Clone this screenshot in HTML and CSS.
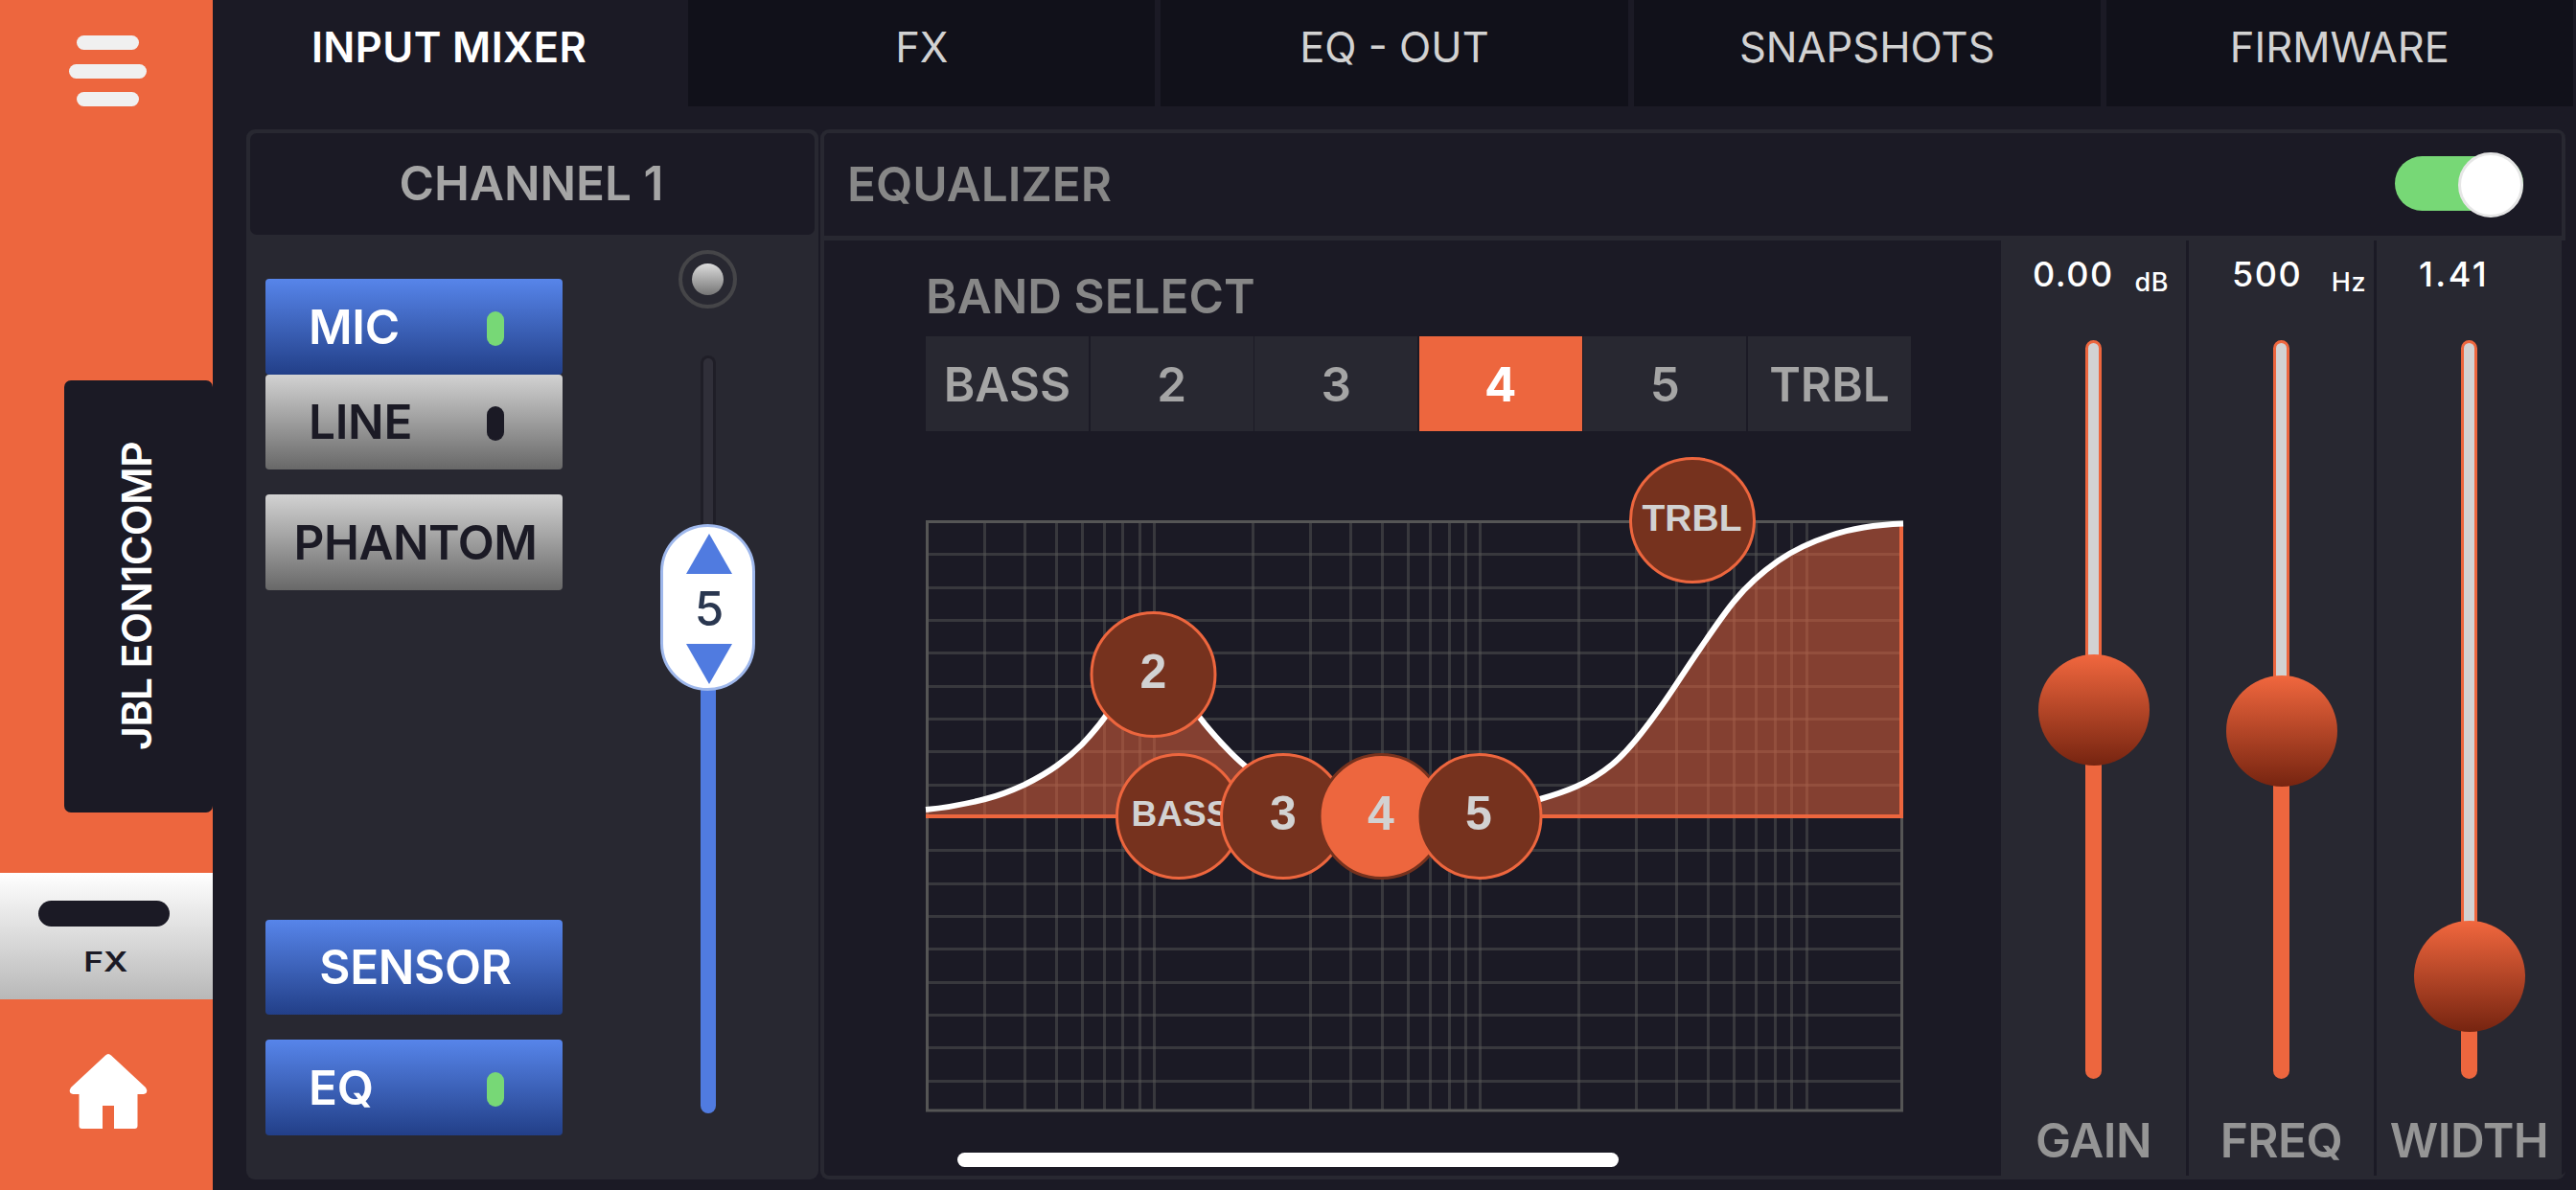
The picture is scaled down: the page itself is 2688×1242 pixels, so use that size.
FILE: index.html
```html
<!DOCTYPE html>
<html lang="en">
<head>
    <meta charset="UTF-8">
    <meta name="viewport" content="width=device-width, initial-scale=1.0">
    <title>Input Mixer</title>
    <link rel="stylesheet" href="styles.css">
</head>
<body>
    <aside class="sidebar">
        <button class="menu-button" aria-label="Menu">
            <span class="menu-bar short"></span>
            <span class="menu-bar"></span>
            <span class="menu-bar short"></span>
        </button>
        <div class="device-tab"><span class="device-name">JBL EON1COMP</span></div>
        <button class="fx-button">
            <span class="fx-light"></span>
            <span class="fx-label">FX</span>
        </button>
        <svg class="home-icon" viewBox="0 0 82 78">
            <path d="M41 0 Q42.500 0 44 1.500 L80 35 Q82 38 81 40 Q80 42 76 42 L71.500 42 L71.500 75 Q71.500 78 68.500 78 L47 78 L47 54 L35 54 L35 78 L13.500 78 Q10.500 78 10.500 75 L10.500 42 L6 42 Q2 42 1 40 Q0 38 2 35 L38 1.500 Q39.500 0 41 0Z" fill="#fff"/>
        </svg>
    </aside>

    <main>
        <nav class="tabs">
            <div class="tab active">INPUT MIXER</div>
            <div class="tab">FX</div>
            <div class="tab">EQ - OUT</div>
            <div class="tab">SNAPSHOTS</div>
            <div class="tab">FIRMWARE</div>
        </nav>

        <div class="panels">
            <section class="channel">
                <h2 class="channel-title">CHANNEL 1</h2>
                <div class="channel-body">
                    <div class="channel-buttons">
                        <button class="btn blue">MIC<span class="led on"></span></button>
                        <button class="btn gray">LINE<span class="led"></span></button>
                        <button class="btn gray center phantom">PHANTOM</button>
                        <button class="btn blue center sensor">SENSOR</button>
                        <button class="btn blue eq">EQ<span class="led on"></span></button>
                    </div>
                    <div class="fader">
                        <div class="signal"><span class="signal-dot"></span></div>
                        <div class="fader-track">
                            <div class="fader-thumb">
                                <svg class="arrow" viewBox="0 0 48 42"><path d="M24 0 L48 42 H0Z" fill="#507be0"/></svg>
                                <span class="fader-value">5</span>
                                <svg class="arrow" viewBox="0 0 48 42"><path d="M0 0 H48 L24 42Z" fill="#507be0"/></svg>
                            </div>
                        </div>
                    </div>
                </div>
            </section>

            <section class="equalizer">
                <header class="eq-header">
                    <h2 class="eq-title">EQUALIZER</h2>
                    <div class="switch"><span class="switch-knob"></span></div>
                </header>
                <div class="eq-body">
                    <div class="eq-main">
                        <h3 class="band-title">BAND SELECT</h3>
                        <div class="bands">
                            <button class="band">BASS</button>
                            <button class="band">2</button>
                            <button class="band">3</button>
                            <button class="band selected">4</button>
                            <button class="band">5</button>
                            <button class="band">TRBL</button>
                        </div>
                        <svg class="graph" viewBox="0 0 1028 700">
                            <g class="grid">
                                <path d="M1.500 108.500H1018.500M1.500 143.500H1018.500M1.500 177.500H1018.500M1.500 211.500H1018.500M1.500 246.500H1018.500M1.500 280.500H1018.500M1.500 314.500H1018.500M1.500 349.500H1018.500M1.500 417.500H1018.500M1.500 452.500H1018.500M1.500 486.500H1018.500M1.500 520.500H1018.500M1.500 555.500H1018.500M1.500 589.500H1018.500M1.500 623.500H1018.500M1.500 658.500H1018.500"/>
                                <path d="M61.500 76V688M103.500 76V688M136.500 76V688M163.500 76V688M186.500 76V688M205.500 76V688M223.500 76V688M238.500 76V688M341.500 76V688M401.500 76V688M443.500 76V688M476.500 76V688M503.500 76V688M526.500 76V688M546.500 76V688M563.500 76V688M578.500 76V688M681.500 76V688M741.500 76V688M783.500 76V688M816.500 76V688M843.500 76V688M866.500 76V688M886.500 76V688M903.500 76V688M919.500 76V688"/>
                            </g>
                            <rect class="frame" x="1.500" y="74.500" width="1017" height="614.500"/>
                            <path class="area" d="M0 375 C21 373 41 369.500 62 364 C76 360.500 89 355.500 103 349 C114 343.500 126 337 137 329 C146 322.500 154 316 163 307 C171 298.500 180 288.500 188 277 C208 248 218 233 238 233 C262 233 272 260 286 279 C294 289.500 302.500 299 311 308 C318.500 316 326 323.500 334 330 C366 356 390 370 440 382 L560 382 C587 378 614 372 641 364 C666 357 691 348.500 716 328 C732 315 748 294.500 764 272 C779 251.500 793 228.500 808 207 C820 189.500 832 171.500 844 157 C859 138.500 875 125.500 890 115 C908 102.500 926 95 944 89 C969 80.500 995 77.500 1020 76.500 V382 H0Z"/>
                            <path class="edge" d="M0 382H1020M1018 78V382"/>
                            <path class="curve" d="M0 375 C21 373 41 369.500 62 364 C76 360.500 89 355.500 103 349 C114 343.500 126 337 137 329 C146 322.500 154 316 163 307 C171 298.500 180 288.500 188 277 C208 248 218 233 238 233 C262 233 272 260 286 279 C294 289.500 302.500 299 311 308 C318.500 316 326 323.500 334 330 C366 356 390 370 440 382"/>
                            <path class="curve" d="M560 382 C587 378 614 372 641 364 C666 357 691 348.500 716 328 C732 315 748 294.500 764 272 C779 251.500 793 228.500 808 207 C820 189.500 832 171.500 844 157 C859 138.500 875 125.500 890 115 C908 102.500 926 95 944 89 C969 80.500 995 77.500 1020 76.500"/>
                            <g class="handles">
                                <circle cx="237.500" cy="234" r="64.500"/>
                                <text x="237.500" y="248">2</text>
                                <circle cx="264" cy="382" r="64.500"/>
                                <text class="small" x="266" y="392">BASS</text>
                                <circle cx="373" cy="382" r="64.500"/>
                                <text x="373" y="396">3</text>
                                <circle class="current" cx="475.500" cy="382" r="64.500"/>
                                <text x="475" y="396">4</text>
                                <circle cx="577.500" cy="382" r="64.500"/>
                                <text x="577" y="396">5</text>
                                <circle cx="800" cy="73" r="64.500"/>
                                <text class="medium" x="799.500" y="83.500">TRBL</text>
                            </g>
                        </svg>
                    </div>
                    <div class="params">
                        <div class="param">
                            <div class="reading gain"><span class="value">0.00</span><span class="unit">dB</span></div>
                            <div class="slider gain"><span class="knob"></span></div>
                            <div class="param-name">GAIN</div>
                        </div>
                        <div class="param">
                            <div class="reading freq"><span class="value">500</span><span class="unit">Hz</span></div>
                            <div class="slider freq"><span class="knob"></span></div>
                            <div class="param-name">FREQ</div>
                        </div>
                        <div class="param">
                            <div class="reading width"><span class="value">1.41</span></div>
                            <div class="slider width"><span class="knob"></span></div>
                            <div class="param-name">WIDTH</div>
                        </div>
                    </div>
                </div>
            </section>
        </div>
    </main>
    <div class="home-indicator"></div>
</body>
</html>
```

FILE: styles.css
```css
* {
    box-sizing: border-box;
}

body {
    display: flex;
    width: 2688px;
    height: 1242px;
    margin: 0;
    overflow: hidden;
    font-family: Inter, "Liberation Sans", sans-serif;
    background-color: #1b1a25;
    color: #fff;
}

h2,
h3 {
    margin: 0;
    font-weight: 600;
    font-size: 49.5px;
}

button {
    padding: 0;
    border: none;
    font-family: inherit;
}

/* Sidebar */
.sidebar {
    display: flex;
    flex-direction: column;
    align-items: center;
    width: 222px;
    height: 1242px;
    background-color: #ed663e;
}

.menu-button {
    display: flex;
    flex-direction: column;
    align-items: center;
    gap: 14.5px;
    width: 100%;
    height: 397px;
    padding: 37px 0 0 3px;
    background: none;
}

.menu-bar {
    width: 81px;
    height: 15px;
    border-radius: 8px;
    background-color: #f0f0f0;
}

.menu-bar.short {
    width: 65px;
}

.device-tab {
    display: flex;
    align-items: center;
    justify-content: center;
    align-self: flex-end;
    width: 155px;
    height: 451px;
    padding-right: 5px;
    border-radius: 7px;
    background-color: #1b1a25;
}

.device-name {
    writing-mode: vertical-rl;
    transform: rotate(180deg);
    font-size: 43px;
    line-height: 60px;
    font-weight: 600;
    letter-spacing: -0.7px;
}

.fx-button {
    display: flex;
    flex-direction: column;
    align-items: center;
    width: 100%;
    height: 132px;
    margin-top: 63px;
    padding-top: 29px;
    background: linear-gradient(#fff, #b8b8b8);
}

.fx-light {
    width: 137px;
    height: 27px;
    margin-right: 5px;
    border-radius: 14px;
    background-color: #1b1a25;
}

.fx-label {
    margin-top: 20px;
    margin-right: 2px;
    font-size: 28px;
    line-height: 34px;
    font-weight: 600;
    color: #1b1a25;
    transform: scaleX(1.26);
}

.home-icon {
    width: 82px;
    height: 78px;
    margin-top: 57px;
    margin-left: 3px;
}

/* Tabs */
main {
    width: 2466px;
}

.tabs {
    display: flex;
    gap: 6px;
    height: 111px;
    padding: 0 3px 0 3px;
}

.tab {
    flex: 1;
    padding-top: 19px;
    font-size: 43.5px;
    line-height: 60px;
    text-align: center;
    color: #d2d2d2;
    background-color: #11111a;
}

.tab.active {
    font-weight: 600;
    letter-spacing: 0.4px;
    color: #fff;
    background-color: transparent;
}

/* Panels */
.panels {
    display: flex;
    gap: 2px;
    padding: 24px 11px 0 35px;
}

.channel {
    width: 597px;
    height: 1096px;
    padding: 4px 4px 0 4px;
    border-radius: 9px;
    background-color: #282831;
}

.channel-title {
    height: 106px;
    padding-right: 2px;
    border-radius: 7px;
    line-height: 104px;
    text-align: center;
    color: #a5a5a5;
    background-color: #1b1a25;
}

.channel-body {
    display: flex;
    padding-left: 16px;
}

.channel-buttons {
    display: flex;
    flex-direction: column;
    width: 310px;
    padding-top: 46px;
}

.btn {
    display: flex;
    align-items: center;
    justify-content: space-between;
    height: 99.5px;
    padding: 0 61px 0 45px;
    border-radius: 4px;
    font-size: 49.5px;
    font-weight: 600;
    letter-spacing: -0.3px;
}

.btn.center {
    justify-content: center;
    padding: 0 0 0 3px;
}

.btn.blue {
    color: #fff;
    background: linear-gradient(#5785ea, #223f88);
}

.btn.gray {
    color: #1b1a25;
    background: linear-gradient(#d2d2d2, #686868);
}

.btn.phantom {
    margin-top: 26px;
    letter-spacing: -0.5px;
}

.btn.sensor {
    margin-top: 344px;
}

.btn.eq {
    margin-top: 26px;
}

.led {
    width: 18px;
    height: 36px;
    margin-top: 4px;
    border-radius: 9px;
    background-color: #1b1a25;
}

.led.on {
    background-color: #77d876;
}

.fader {
    display: flex;
    flex-direction: column;
    align-items: center;
    margin-left: 101px;
    width: 101px;
}

.signal {
    display: flex;
    align-items: center;
    justify-content: center;
    width: 61px;
    height: 61px;
    margin-top: 15.5px;
    border: 4px solid #454548;
    border-radius: 50%;
}

.signal-dot {
    width: 33px;
    height: 33px;
    border-radius: 50%;
    background: linear-gradient(#dcdcdc, #757575);
}

.fader-track {
    display: flex;
    justify-content: center;
    width: 16px;
    height: 791px;
    margin-top: 49px;
    padding-top: 173px;
    border: 3px solid transparent;
    border-radius: 8px;
    background:
        linear-gradient(#302f39 250px, #507be0 250px) padding-box,
        linear-gradient(#1f1e27 250px, #507be0 250px) border-box;
}

.fader-thumb {
    flex: none;
    display: flex;
    flex-direction: column;
    align-items: center;
    width: 99px;
    height: 174px;
    padding: 7px 0 0 3px;
    border: 3px solid #9fb8ec;
    border-radius: 50px;
    background-color: #fff;
}

.arrow {
    width: 48px;
    height: 42px;
}

.fader-value {
    font-size: 49.5px;
    line-height: 73px;
    font-weight: 500;
    color: #2a3750;
}

/* Equalizer */
.equalizer {
    width: 1821px;
    height: 1096px;
    border: 4px solid #282831;
    border-right: none;
    border-radius: 9px;
}

.eq-header {
    display: flex;
    align-items: center;
    justify-content: space-between;
    height: 112px;
    padding: 0 40px 0 24px;
    border-right: 4px solid #282831;
    border-bottom: 5px solid #282831;
    border-top-right-radius: 6px;
}

.eq-title {
    margin-top: -1px;
    color: #878787;
}

.switch {
    display: flex;
    align-items: center;
    justify-content: flex-end;
    width: 134px;
    height: 57px;
    margin-top: -2px;
    border-radius: 29px;
    background-color: #77d876;
}

.switch-knob {
    flex: none;
    width: 68px;
    height: 68px;
    margin-top: 3px;
    border: 3px solid #e6e6e6;
    border-radius: 50%;
    background-color: #fff;
}

.eq-body {
    display: flex;
    height: 976px;
}

.eq-main {
    width: 1228px;
    padding: 28px 0 0 106px;
}

.band-title {
    line-height: 60px;
    color: #878787;
}

.bands {
    display: flex;
    gap: 1.6px;
    width: 1028px;
    height: 99px;
    margin-top: 12px;
}

.band {
    flex: 1;
    font-size: 49.5px;
    font-weight: 600;
    color: #a5a5a5;
    background-color: #282831;
}

.band.selected {
    font-weight: 700;
    color: #fff;
    background-color: #ed663e;
}

.graph {
    display: block;
    width: 1028px;
    height: 700px;
    margin-top: 20px;
    overflow: visible;
}

.grid {
    fill: none;
    stroke: rgba(85, 85, 85, 0.5);
    stroke-width: 3;
}

.frame {
    fill: none;
    stroke: #555;
    stroke-width: 3;
}

.area {
    fill: rgba(237, 102, 62, 0.5);
}

.edge {
    fill: none;
    stroke: #ed663e;
    stroke-width: 4;
}

.curve {
    fill: none;
    stroke: #fff;
    stroke-width: 6;
}

.handles circle {
    fill: #76321e;
    stroke: #ed663e;
    stroke-width: 3;
}

.handles .current {
    fill: #ed663e;
    stroke: #76321e;
}

.handles text {
    font-family: "Liberation Sans", sans-serif;
    font-size: 50px;
    font-weight: 700;
    text-anchor: middle;
    fill: #d2d2d2;
}

.handles .small {
    font-size: 37px;
}

.handles .medium {
    font-size: 39px;
}

/* Gain, frequency and width sliders */
.params {
    display: flex;
    gap: 3px;
}

.param {
    display: flex;
    flex-direction: column;
    align-items: center;
    width: 193px;
    background-color: #282831;
}

.reading {
    display: flex;
    align-items: baseline;
    justify-content: space-between;
    width: 100%;
    height: 104px;
    padding-top: 13px;
    font-weight: 500;
}

.reading.gain {
    padding-left: 33px;
    padding-right: 18px;
}

.reading.freq {
    padding-left: 45px;
    padding-right: 8px;
}

.reading.width {
    padding-left: 44px;
}

.value {
    font-size: 36px;
    line-height: 44px;
    letter-spacing: 1.5px;
}

.reading.width .value {
    letter-spacing: 2.4px;
}

.unit {
    position: relative;
    top: 5px;
    font-size: 27px;
    letter-spacing: 0.5px;
}

.slider {
    display: flex;
    justify-content: center;
    width: 17px;
    height: 771px;
    border: 3px solid #ed663e;
    border-radius: 9px;
    background: linear-gradient(#d2d2d2, #d2d2d2) no-repeat #ed663e;
}

.slider.gain {
    padding-top: 325px;
    background-size: 100% 380px;
}

.slider.freq {
    padding-top: 347px;
    background-size: 100% 400px;
}

.slider.width {
    padding-top: 603px;
    background-size: 100% 650px;
}

.knob {
    flex: none;
    width: 116px;
    height: 116px;
    border-radius: 50%;
    background: linear-gradient(#f1673e, #762410);
}

.param-name {
    margin-top: 34px;
    font-size: 49.5px;
    line-height: 60px;
    font-weight: 600;
    letter-spacing: -0.5px;
    color: #959595;
}

.home-indicator {
    position: absolute;
    left: 999px;
    top: 1203px;
    width: 690px;
    height: 15px;
    border-radius: 8px;
    background-color: #fff;
}
```
